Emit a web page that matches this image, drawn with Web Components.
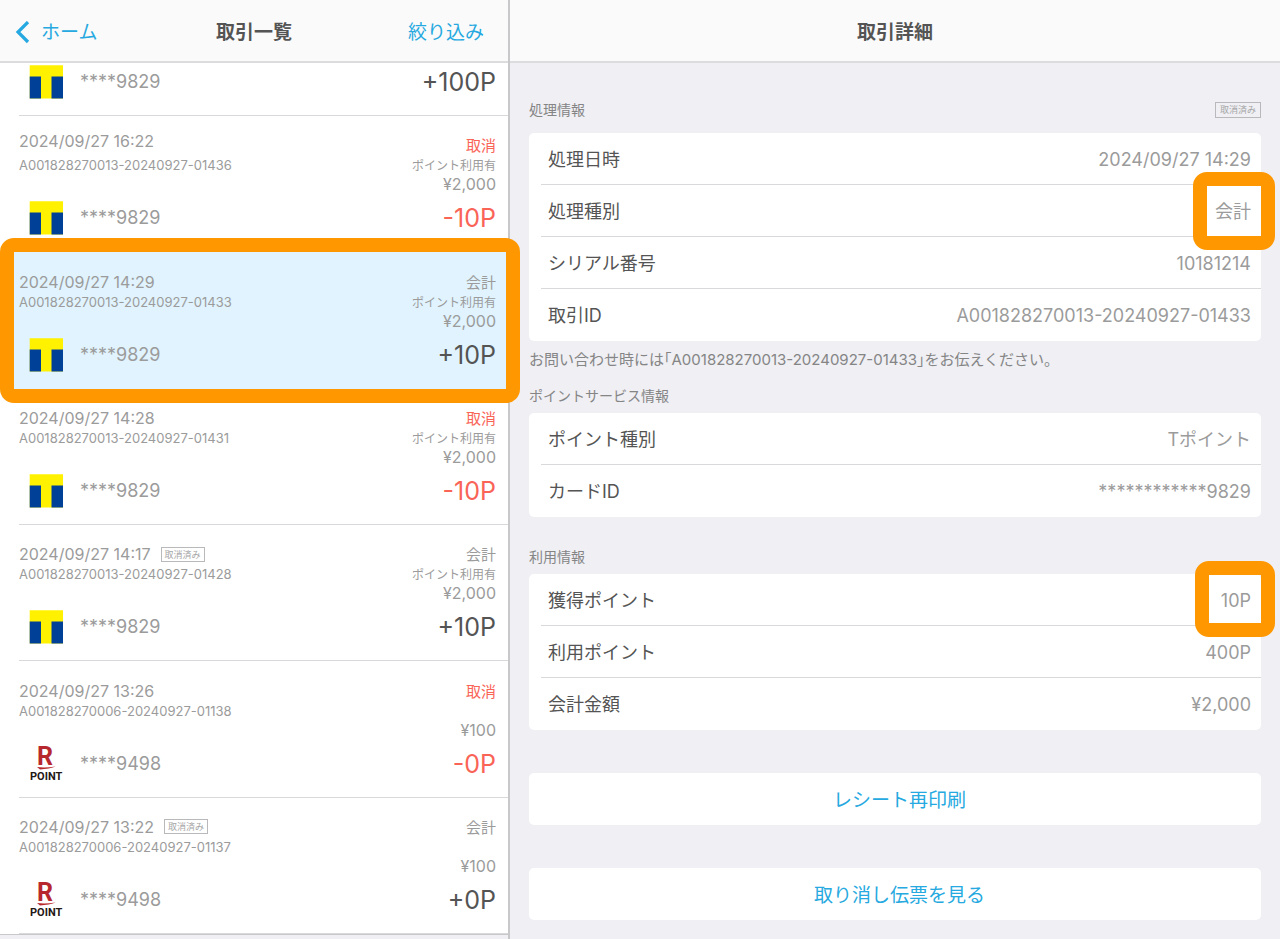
<!DOCTYPE html>
<html lang="ja">
<head>
<meta charset="utf-8">
<meta name="viewport" content="width=device-width, initial-scale=1">
<title>取引詳細</title>
<style>
  :root {
    --blue: #26a9e0;
    --gray: #9b9b9b;
    --ink: #545454;
    --red: #f96457;
    --line: #d9d9db;
    --ground: #efeff4;
    --mark: #ff9800;
  }
  body {
    margin: 0;
    background: var(--ground);
    color: var(--ink);
    font-family: Inter, "Noto Sans CJK JP", sans-serif;
  }
</style>
</head>
<body>
<pos-app></pos-app>

<script>
const define = (name, html, setup) => {
  const template = document.createElement('template');
  template.innerHTML = html;
  customElements.define(name, class extends HTMLElement {
    constructor() {
      super();
      this.attachShadow({ mode: 'open' }).append(template.content.cloneNode(true));
    }
    connectedCallback() {
      if (setup) setup(this, this.shadowRoot);
    }
  });
};

define('app-bar', `
  <style>
    :host { display: grid; grid-template-columns: 1fr auto 1fr; align-items: center;
      box-sizing: border-box; height: 63px; padding: 4px 15px 0;
      background: #fafafa; border-bottom: 2px solid #dcdcde; }
    h1 { margin: 0; font-size: 19px; line-height: 28px; font-weight: 700; }
    .end { justify-self: end; margin-right: 9px; }
  </style>
  <div><slot name="start"></slot></div>
  <h1><slot></slot></h1>
  <div class="end"><slot name="end"></slot></div>`);

define('bar-button', `
  <style>
    :host { display: block; }
    button { display: flex; align-items: center; gap: 11px; margin: 0; padding: 0; border: 0;
      background: none; color: var(--blue); font: inherit; font-size: 19px; line-height: 28px; }
    svg { display: none; }
    :host([back]) svg { display: block; }
  </style>
  <button type="button">
    <svg width="15" height="24" viewBox="0 0 15 24" aria-hidden="true">
      <path d="M13 1 3 11l10 10" fill="none" stroke="#26a9e0" stroke-width="3.2"/>
    </svg>
    <span><slot></slot></span>
  </button>`);

define('status-tag', `
  <style>
    :host { display: inline-block; box-sizing: border-box; padding: 0 3px; border: 1px solid #b9b9bb;
      color: #a6a6a6; font-size: 9px; line-height: 13px; white-space: nowrap; }
    :host([size="large"]) { line-height: 14px; padding: 0 4px; }
  </style>
  <slot></slot>`);

define('service-logo', `
  <style>
    :host { display: block; width: 34px; height: 34px; }
    svg { display: none; width: 34px; height: 34px; overflow: visible; }
    :host([kind="t"]) .t, :host([kind="r"]) .r { display: block; }
  </style>
  <svg class="t" viewBox="0 0 34 34" role="img" aria-label="Tポイント">
    <path fill="#fff100" d="M.7.3H34v33.200H.7z"/>
    <path fill="#004097" d="M.7 11.500h11.300v22H.7zM22.500 11.500H34v22H22.500z"/>
  </svg>
  <svg class="r" viewBox="0 0 34 34" role="img" aria-label="R POINT">
    <text x="8" y="18" font-family="Roboto, sans-serif" font-weight="700" font-size="25" fill="#b7282e">R</text>
    <path fill="#b7282e" d="M8 20c6 .7 12 .5 18.500-.6-3 1.800-10 2.200-15.500 3z"/>
    <text x="1" y="33" font-family="Roboto, sans-serif" font-weight="700" font-size="11" fill="#231815">POINT</text>
  </svg>`);

define('txn-row', `
  <style>
    :host { display: block; position: relative; padding-left: 19px; color: var(--gray); }
    a { display: flex; flex-direction: column; justify-content: flex-end; box-sizing: border-box;
      height: 100%; padding: 0 12px 16px 0; border-bottom: 1px solid var(--line);
      color: inherit; text-decoration: none; }
    .top, .bottom { display: flex; justify-content: space-between; }
    .top { align-items: flex-start; min-height: 59px; }
    .who { display: flex; flex-direction: column; justify-content: flex-end; height: 40px; }
    .when { display: flex; align-items: center; gap: 10px; font-size: 16px; line-height: 20px; }
    .id { font-size: 13px; line-height: 20px; }
    :host([loose]) .who { gap: 4px; height: 44px; margin-top: -4px; }
    .what { display: flex; flex-direction: column; align-items: flex-end; }
    .kind { font-size: 15px; line-height: 21px; }
    .used { height: 20px; font-size: 12px; line-height: 20px; }
    .yen { font-size: 16px; line-height: 17px; }
    .bottom { align-items: center; height: 34px; margin-top: 7px; }
    .card { display: flex; align-items: center; gap: 17px; padding-left: 10px;
      font-size: 18px; line-height: 24px; }
    .points { color: var(--ink); font-size: 25px; line-height: 32px; }
    :host([void]) .kind, :host([void]) .points { color: var(--red); }
    :host([partial]) .top { display: none; }
    :host([selected]) { z-index: 2; background: #e0f3fe; }
    :host([selected]) a { border-color: transparent; }
    :host([selected])::after { content: ""; position: absolute; inset: -14px -12px -14px 0;
      border: 14px solid var(--mark); border-radius: 14px; pointer-events: none; }
    status-tag[hidden] { display: none; }
  </style>
  <a href="#">
    <div class="top">
      <div class="who">
        <div class="when"><span data-of="when"></span><status-tag hidden>取消済み</status-tag></div>
        <div class="id" data-of="txn"></div>
      </div>
      <div class="what">
        <div class="kind" data-of="kind"></div>
        <div class="used" data-of="used"></div>
        <div class="yen" data-of="yen"></div>
      </div>
    </div>
    <div class="bottom">
      <div class="card"><service-logo></service-logo><span data-of="card"></span></div>
      <div class="points" data-of="points"></div>
    </div>
  </a>`, (host, root) => {
  for (const node of root.querySelectorAll('[data-of]')) {
    node.textContent = host.getAttribute(node.dataset.of) || '';
  }
  root.querySelector('service-logo').setAttribute('kind', host.getAttribute('logo'));
  root.querySelector('status-tag').hidden = !host.hasAttribute('cancelled');
});

define('info-section', `
  <style>
    :host { display: block; }
    header { display: flex; justify-content: space-between; align-items: center; height: 24px;
      color: #858585; }
    h2 { margin: 0; font-size: 14px; line-height: 24px; font-weight: 400; }
    .rows { margin-top: 5px; border-radius: 5px; background: #fff; }
    :host([wide]) .rows { margin-top: 11px; }
    .note { margin: 0; color: #858585; font-size: 15px; line-height: 37px;
      font-feature-settings: "halt"; }
  </style>
  <header><h2></h2><slot name="tag"></slot></header>
  <div class="rows"><slot></slot></div>
  <p class="note"><slot name="note"></slot></p>`, (host, root) => {
  root.querySelector('h2').textContent = host.getAttribute('heading');
  root.querySelector('.note').hidden = !host.querySelector('[slot="note"]');
});

define('info-row', `
  <style>
    :host { display: block; position: relative; padding-left: 12px; }
    .line { display: flex; justify-content: space-between; align-items: center; box-sizing: border-box;
      height: 52px; padding: 3px 10px 0 7px; border-bottom: 1px solid var(--line);
      font-size: 18px; line-height: 26px; }
    :host(:last-of-type) .line { border-bottom-color: transparent; }
    .value { color: var(--gray); }
    :host([marked]) { z-index: 1; }
    :host([marked])::after { content: ""; position: absolute; top: -13px; right: -14px;
      box-sizing: border-box; width: 82px; height: 78px;
      border: 14px solid var(--mark); border-radius: 14px; pointer-events: none; }
    :host([marked="small"])::after { width: 80px; height: 76px; }
  </style>
  <div class="line"><span data-label></span><span class="value"><slot></slot></span></div>`,
(host, root) => {
  root.querySelector('[data-label]').textContent = host.getAttribute('label');
});

define('action-button', `
  <style>
    :host { display: block; }
    button { display: block; width: 100%; height: 52px; margin: 0; padding: 4px 0 0 9px; border: 0;
      border-radius: 5px; background: #fff; color: var(--blue); font: inherit;
      font-size: 19px; line-height: 28px; }
  </style>
  <button type="button"><slot></slot></button>`);

define('pos-app', `
  <style>
    :host { display: grid; grid-template-columns: 510px 1fr; min-height: 100vh; }
    .list { display: flex; flex-direction: column; position: relative; z-index: 1;
      border-right: 2px solid #c8c8cb; }
    .partial { height: 53px; background: #fff; }
    .partial txn-row { height: 100%; }
    .rows { flex: 1; display: grid; grid-auto-rows: minmax(136px, 1fr); background: #fff; }
    .foot { height: 4px; border-top: 1px solid #c8c8cb; }
    .sections { display: flex; flex-direction: column; padding: 35px 19px 19px; }
    info-section + info-section { margin-top: 28px; }
    info-section.after-note { margin-top: 6px; }
    .actions { display: grid; gap: 43px; margin-top: 43px; }
  </style>
  <aside class="list">
    <app-bar>取引一覧<bar-button slot="start" back>ホーム</bar-button><bar-button slot="end">絞り込み</bar-button></app-bar>
    <div class="partial"><txn-row partial logo="t" card="****9829" points="+100P"></txn-row></div>
    <div class="rows">
      <txn-row loose void when="2024/09/27 16:22" txn="A001828270013-20240927-01436" kind="取消" used="ポイント利用有" yen="¥2,000" logo="t" card="****9829" points="-10P"></txn-row>
      <txn-row selected when="2024/09/27 14:29" txn="A001828270013-20240927-01433" kind="会計" used="ポイント利用有" yen="¥2,000" logo="t" card="****9829" points="+10P"></txn-row>
      <txn-row void when="2024/09/27 14:28" txn="A001828270013-20240927-01431" kind="取消" used="ポイント利用有" yen="¥2,000" logo="t" card="****9829" points="-10P"></txn-row>
      <txn-row cancelled when="2024/09/27 14:17" txn="A001828270013-20240927-01428" kind="会計" used="ポイント利用有" yen="¥2,000" logo="t" card="****9829" points="+10P"></txn-row>
      <txn-row void when="2024/09/27 13:26" txn="A001828270006-20240927-01138" kind="取消" yen="¥100" logo="r" card="****9498" points="-0P"></txn-row>
      <txn-row cancelled when="2024/09/27 13:22" txn="A001828270006-20240927-01137" kind="会計" yen="¥100" logo="r" card="****9498" points="+0P"></txn-row>
    </div>
    <div class="foot"></div>
  </aside>
  <main>
    <app-bar>取引詳細</app-bar>
    <div class="sections">
      <info-section heading="処理情報" wide>
        <status-tag slot="tag" size="large">取消済み</status-tag>
        <info-row label="処理日時">2024/09/27 14:29</info-row>
        <info-row label="処理種別" marked>会計</info-row>
        <info-row label="シリアル番号">10181214</info-row>
        <info-row label="取引ID">A001828270013-20240927-01433</info-row>
        <span slot="note">お問い合わせ時には「A001828270013-20240927-01433」をお伝えください。</span>
      </info-section>
      <info-section class="after-note" heading="ポイントサービス情報">
        <info-row label="ポイント種別">Tポイント</info-row>
        <info-row label="カードID">************9829</info-row>
      </info-section>
      <info-section heading="利用情報">
        <info-row label="獲得ポイント" marked="small">10P</info-row>
        <info-row label="利用ポイント">400P</info-row>
        <info-row label="会計金額">¥2,000</info-row>
      </info-section>
      <div class="actions">
        <action-button>レシート再印刷</action-button>
        <action-button>取り消し伝票を見る</action-button>
      </div>
    </div>
  </main>`);
</script>
</body>
</html>
